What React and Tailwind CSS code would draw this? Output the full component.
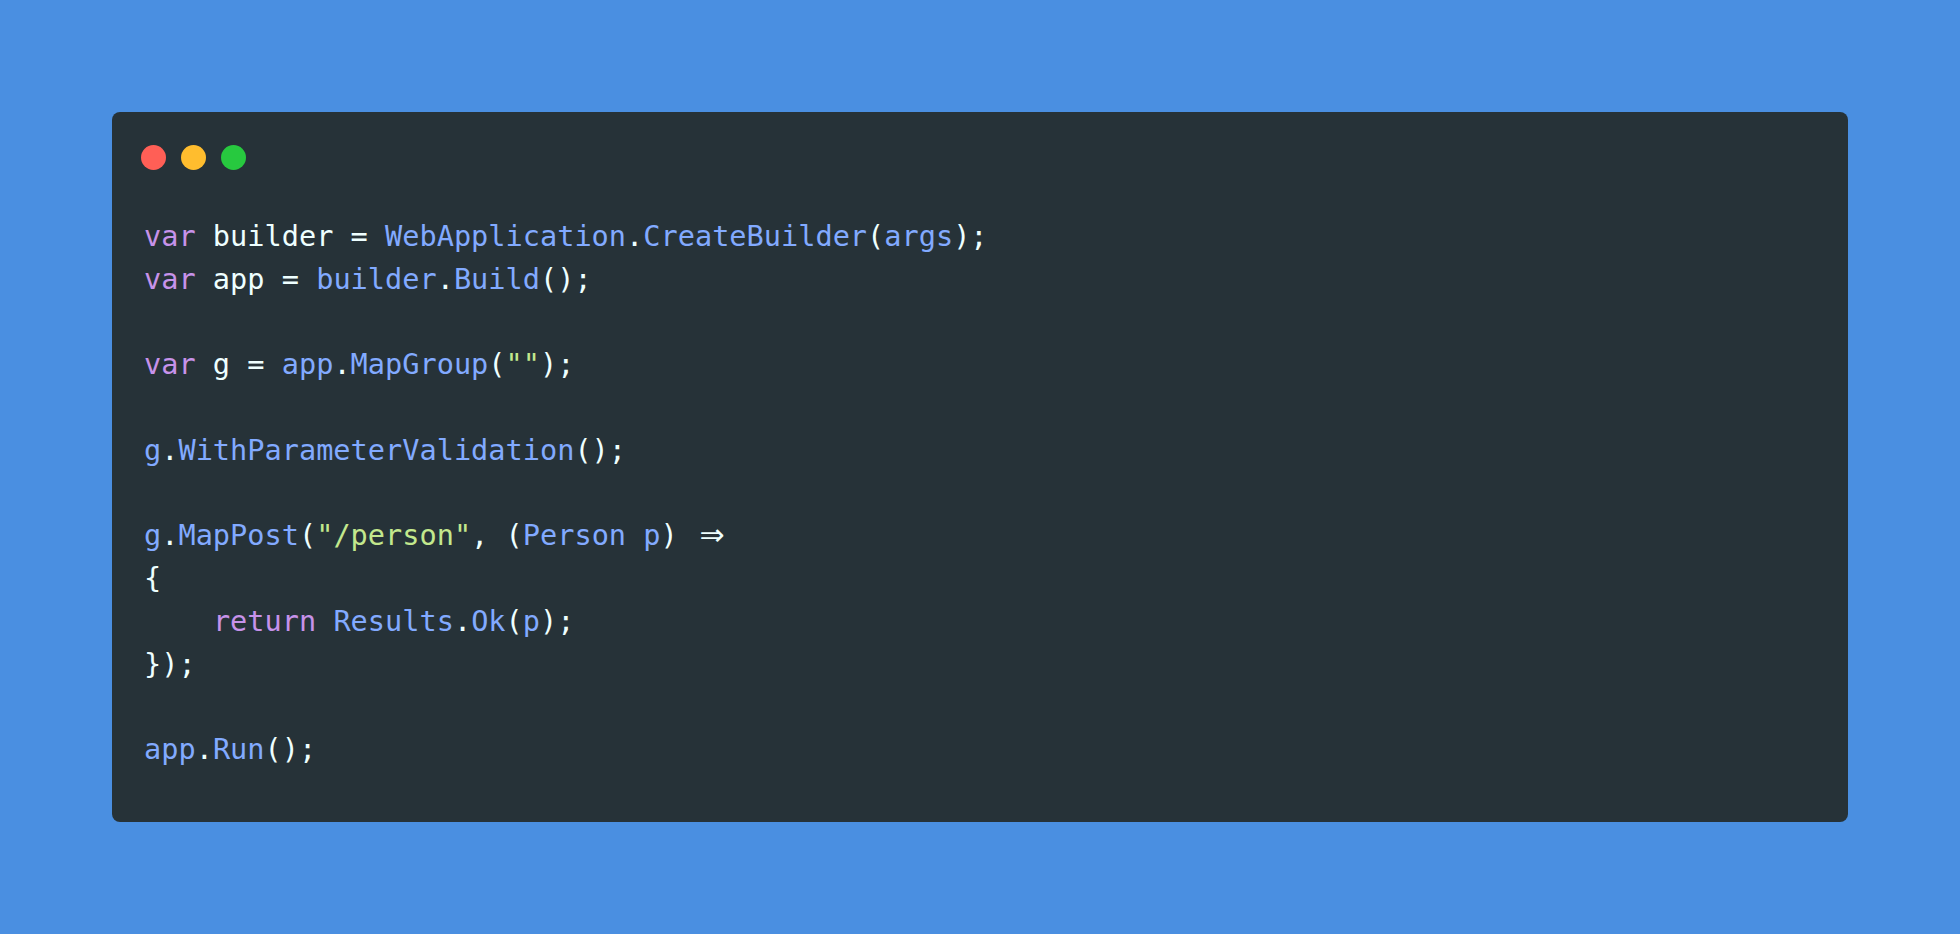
const C = {
  kw: "text-[#c792ea]",
  fn: "text-[#82aaff]",
  str: "text-[#c3e88d]",
  txt: "text-[#eeffff]",
};

// each line is a list of [text, color] tokens; empty list = blank line
const lines = [
  [["var", C.kw], [" builder = ", C.txt], ["WebApplication", C.fn], [".", C.txt], ["CreateBuilder", C.fn], ["(", C.txt], ["args", C.fn], [");", C.txt]],
  [["var", C.kw], [" app = ", C.txt], ["builder", C.fn], [".", C.txt], ["Build", C.fn], ["();", C.txt]],
  [],
  [["var", C.kw], [" g = ", C.txt], ["app", C.fn], [".", C.txt], ["MapGroup", C.fn], ["(", C.txt], ['""', C.str], [");", C.txt]],
  [],
  [["g", C.fn], [".", C.txt], ["WithParameterValidation", C.fn], ["();", C.txt]],
  [],
  [["g", C.fn], [".", C.txt], ["MapPost", C.fn], ["(", C.txt], ['"/person"', C.str], [", (", C.txt], ["Person", C.fn], [" ", C.txt], ["p", C.fn], [") ", C.txt], ["arrow", C.txt]],
  [["{", C.txt]],
  [["    ", C.txt], ["return", C.kw], [" ", C.txt], ["Results", C.fn], [".", C.txt], ["Ok", C.fn], ["(", C.txt], ["p", C.fn], [");", C.txt]],
  [["});", C.txt]],
  [],
  [["app", C.fn], [".", C.txt], ["Run", C.fn], ["();", C.txt]],
];

function Token({ text, color }) {
  if (text === "arrow") {
    // fira-style => ligature takes two cells
    return (
      <span className={`${color} inline-block w-[2ch] text-center`}>
        <span className="font-['DejaVu_Sans',sans-serif] text-[30px] leading-none">⇒</span>
      </span>
    );
  }
  return <span className={color}>{text}</span>;
}

export default function App() {
  return (
    <div className="h-[934px] w-full bg-[#4a8fe1] flex items-center justify-center">
      <div className="w-[1736px] bg-[#263238] rounded-[8px] pt-[33px] pb-[51px]">
        <div className="flex gap-[15px] pl-[29px]">
          <div className="w-[25px] h-[25px] rounded-full bg-[#ff5f56]" />
          <div className="w-[25px] h-[25px] rounded-full bg-[#ffbd2e]" />
          <div className="w-[25px] h-[25px] rounded-full bg-[#27c93f]" />
        </div>
        <div className="mt-[45px] pl-[32px] font-['DejaVu_Sans_Mono',monospace] text-[28.6px] leading-[42.8px] whitespace-pre">
          {lines.map((line, i) => (
            <div key={i} className="h-[42.8px]">
              {line.map(([text, color], j) => (
                <Token key={j} text={text} color={color} />
              ))}
            </div>
          ))}
        </div>
      </div>
    </div>
  );
}
